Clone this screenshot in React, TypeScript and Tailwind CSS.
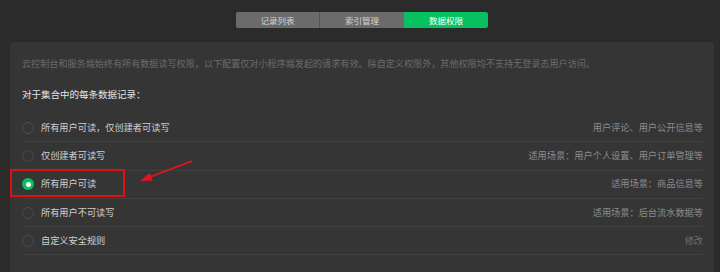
import React from "react";

const rows = [
  { label: "所有用户可读，仅创建者可读写", hint: "用户评论、用户公开信息等" },
  { label: "仅创建者可读写", hint: "适用场景：用户个人设置、用户订单管理等" },
  { label: "所有用户可读", hint: "适用场景：商品信息等", checked: true },
  { label: "所有用户不可读写", hint: "适用场景：后台流水数据等" },
  { label: "自定义安全规则", hint: "修改", dim: true },
];

const Radio = ({ checked }: { checked?: boolean }) =>
  checked ? (
    <span className="flex items-center justify-center w-[12px] h-[12px] rounded-full bg-[#07c160] shrink-0">
      <span className="w-[5px] h-[5px] rounded-full bg-white" />
    </span>
  ) : (
    <span className="w-[12px] h-[12px] rounded-full border border-[#4c4c4c] shrink-0" />
  );

export default function App() {
  return (
    <div
      className="relative w-[720px] h-[272px] overflow-hidden bg-[#2b2b2b]"
      style={{ fontFamily: '"Noto Sans CJK SC", "Noto Sans", sans-serif' }}
    >
      <div className="ml-[10px] mr-[6px] pt-[12px] flex justify-center">
        <div className="flex h-[16px] text-[8.5px] leading-[16px]">
          <div className="w-[84px] text-center bg-[#6b6b6b] text-[#d4d4d4] rounded-l-[2px] border-r border-[#555]">
            记录列表
          </div>
          <div className="w-[84px] text-center bg-[#6b6b6b] text-[#d4d4d4]">
            索引管理
          </div>
          <div className="w-[84px] text-center bg-[#07c160] text-white rounded-r-[2px]">
            数据权限
          </div>
        </div>
      </div>

      <div className="ml-[10px] mr-[6px] mt-[14px] h-[260px] bg-[#353535] rounded-t-[3px] pl-[12px] pr-[11px] pt-[14px]">
        <p className="h-[14px] leading-[14px] text-[9.1px] text-[#6c6c6c] whitespace-nowrap">
          云控制台和服务端始终有所有数据读写权限，以下配置仅对小程序端发起的请求有效。除自定义权限外，其他权限均不支持无登录态用户访问。
        </p>
        <p className="mt-[17px] h-[14px] leading-[14px] text-[9.5px] text-[#e4e4e4]">
          对于集合中的每条数据记录：
        </p>
        <div className="mt-[13px]">
          {rows.map((r) => (
            <div
              key={r.label}
              className="relative flex items-center h-[28.3px] border-b border-[#414141] text-[9.2px]"
            >
              <Radio checked={r.checked} />
              <span className="ml-[7px] text-[#cfcfcf]">{r.label}</span>
              <span
                className={
                  r.dim ? "ml-auto text-[#6f6f6f]" : "ml-auto text-[#8c8c8c]"
                }
              >
                {r.hint}
              </span>
              {r.checked && (
                <div className="absolute left-[-12px] top-[-2px] w-[115px] h-[28px] border-2 border-[#e0100f]" />
              )}
            </div>
          ))}
        </div>
      </div>

      <svg
        className="absolute left-[130px] top-[150px]"
        width="70"
        height="40"
        viewBox="0 0 70 40"
      >
        <line x1="62" y1="11" x2="20" y2="27" stroke="#e8141b" strokeWidth="1.8" />
        <polygon points="10,31 22.6,30.4 19.8,23" fill="#e8141b" />
      </svg>
    </div>
  );
}
